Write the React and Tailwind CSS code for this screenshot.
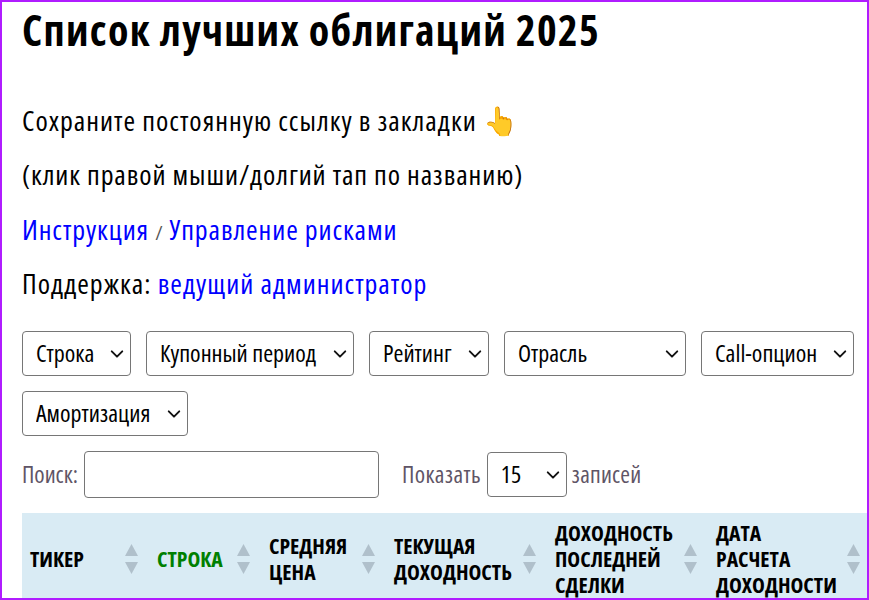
const SortArrows = () => (
  <svg width="13" height="30" viewBox="0 0 13 30" className="shrink-0">
    <polygon points="6.5,0 13,12 0,12" fill="#b0c0cb" />
    <polygon points="0,18 13,18 6.5,30" fill="#b0c0cb" />
  </svg>
);

const Chevron = () => (
  <svg width="14" height="14" viewBox="0 0 16 16" fill="none" className="pointer-events-none absolute right-[7px] top-1/2 -translate-y-1/2">
    <path d="m2 5 6 6 6-6" stroke="#111" strokeWidth="2.2" strokeLinecap="round" strokeLinejoin="round" />
  </svg>
);

const Filter = ({ label, className = "" }) => (
  <div className={`relative h-[45px] ${className}`}>
    <select className="h-full w-full appearance-none rounded border border-[#767676] bg-white pb-[2px] pl-[13px] text-[24px] text-black">
      <option>{label}</option>
    </select>
    <Chevron />
  </div>
);

const columns = [
  { w: "w-[127px]", lines: ["ТИКЕР"] },
  { w: "w-[112px]", lines: ["СТРОКА"], green: true },
  { w: "w-[125px]", lines: ["СРЕДНЯЯ", "ЦЕНА"] },
  { w: "w-[161px]", lines: ["ТЕКУЩАЯ", "ДОХОДНОСТЬ"] },
  { w: "w-[161px]", lines: ["ДОХОДНОСТЬ", "ПОСЛЕДНЕЙ", "СДЕЛКИ"] },
  { w: "w-[163px]", lines: ["ДАТА", "РАСЧЕТА", "ДОХОДНОСТИ"] },
];

export default function App() {
  return (
    <div className="box-border h-[600px] w-[869px] overflow-hidden border-2 border-[#b01cff] bg-white pl-5 font-['Open_Sans',sans-serif] text-black [font-stretch:75%]">
      <h1 className="mt-[3px] text-[42px] font-bold leading-[50px] tracking-[1.3px]">Список лучших облигаций 2025</h1>
      <p className="mt-[50px] text-[28px] leading-[30px] tracking-[1px]">Сохраните постоянную ссылку в закладки 👆</p>
      <p className="mt-6 text-[28px] leading-[30px] tracking-[0.9px]">(клик правой мыши/долгий тап по названию)</p>
      <p className="mt-[25px] text-[28px] leading-[30px] tracking-[0.9px]">
        <a className="text-[#0000ff]">Инструкция</a> <span className="text-[20px] leading-none text-[#555]">/</span>{" "}
        <a className="text-[#0000ff]">Управление рисками</a>
      </p>
      <p className="mt-6 text-[28px] leading-[30px] tracking-[1px]">
        Поддержка: <a className="text-[#0000ff]">ведущий администратор</a>
      </p>
      <div className="mt-[33px] flex flex-wrap gap-[15px]">
        <Filter label="Строка" className="w-[109px]" />
        <Filter label="Купонный период" className="w-[208px]" />
        <Filter label="Рейтинг" className="w-[120px]" />
        <Filter label="Отрасль" className="w-[182px]" />
        <Filter label="Call-опцион" className="w-[153px]" />
        <Filter label="Амортизация" className="w-[166px]" />
      </div>
      <div className="mt-[15px] flex items-center text-[23.5px] text-[#5f5566]">
        <span>Поиск:</span>
        <input className="ml-[6px] h-[47px] w-[295px] rounded border border-[#767676] bg-white" />
        <span className="ml-[23px] tracking-[0.4px]">Показать</span>
        <Filter label="15" className="ml-[6px] w-[80px]" />
        <span className="ml-[5px] tracking-[0.2px]">записей</span>
      </div>
      <table className="mt-[15px] w-[849px] table-fixed border-collapse bg-[#d9ebf4]">
        <thead>
          <tr className="h-[92px]">
            {columns.map((c) => (
              <th key={c.lines[0]} className={`${c.w} p-0 pl-2 pr-[11px] text-left`}>
                <div className="flex items-center justify-between">
                  <span className={`text-[21.7px] font-bold leading-[26px] ${c.green ? "text-[#008000]" : "text-black"}`}>
                    {c.lines.map((l) => (
                      <span key={l} className="block">{l}</span>
                    ))}
                  </span>
                  <SortArrows />
                </div>
              </th>
            ))}
          </tr>
        </thead>
      </table>
    </div>
  );
}
